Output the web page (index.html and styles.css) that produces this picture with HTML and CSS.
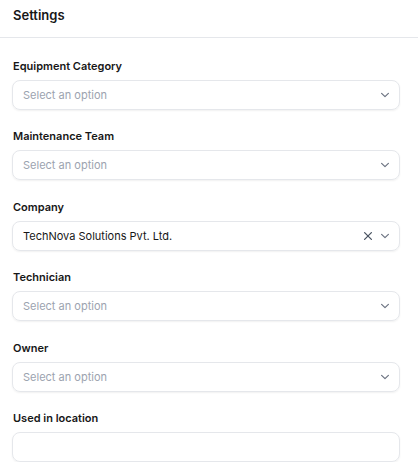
FILE: index.html
```html
<!DOCTYPE html>
<html>
<head>
	<title>Settings</title>
	<meta charset="utf-8">
	<link rel="stylesheet" href="styles.css">
</head>
<body>
	<div class="panel">
		<div class="panelhead">Settings</div>
		<div class="form">
			<div class="field">
				<label>Equipment Category</label>
				<div class="select">
					<span class="placeholder">Select an option</span>
					<svg class="chev" width="10" height="10" viewBox="0 0 10 10"><path d="M1.6 3.4 L5 6.6 L8.4 3.4" fill="none" stroke="#6b7280" stroke-width="1.2" stroke-linecap="round" stroke-linejoin="round"/></svg>
				</div>
			</div>
			<div class="field">
				<label>Maintenance Team</label>
				<div class="select">
					<span class="placeholder">Select an option</span>
					<svg class="chev" width="10" height="10" viewBox="0 0 10 10"><path d="M1.6 3.4 L5 6.6 L8.4 3.4" fill="none" stroke="#6b7280" stroke-width="1.2" stroke-linecap="round" stroke-linejoin="round"/></svg>
				</div>
			</div>
			<div class="field">
				<label>Company</label>
				<div class="select">
					<span class="value">TechNova Solutions Pvt. Ltd.</span>
					<svg class="clear" width="10" height="10" viewBox="0 0 10 10"><path d="M1.6 1.6 L8.4 8.4 M8.4 1.6 L1.6 8.4" fill="none" stroke="#4b5563" stroke-width="1.3" stroke-linecap="round"/></svg>
					<svg class="chev" width="10" height="10" viewBox="0 0 10 10"><path d="M1.6 3.4 L5 6.6 L8.4 3.4" fill="none" stroke="#6b7280" stroke-width="1.2" stroke-linecap="round" stroke-linejoin="round"/></svg>
				</div>
			</div>
			<div class="field">
				<label>Technician</label>
				<div class="select">
					<span class="placeholder">Select an option</span>
					<svg class="chev" width="10" height="10" viewBox="0 0 10 10"><path d="M1.6 3.4 L5 6.6 L8.4 3.4" fill="none" stroke="#6b7280" stroke-width="1.2" stroke-linecap="round" stroke-linejoin="round"/></svg>
				</div>
			</div>
			<div class="field">
				<label>Owner</label>
				<div class="select">
					<span class="placeholder">Select an option</span>
					<svg class="chev" width="10" height="10" viewBox="0 0 10 10"><path d="M1.6 3.4 L5 6.6 L8.4 3.4" fill="none" stroke="#6b7280" stroke-width="1.2" stroke-linecap="round" stroke-linejoin="round"/></svg>
				</div>
			</div>
			<div class="field">
				<label>Used in location</label>
				<div class="select"></div>
			</div>
		</div>
	</div>
</body>
</html>
```

FILE: styles.css
```css
body {
	margin: 0;
	background-color: #fff;
	font-family: Inter, "Noto Sans", sans-serif;
	color: #171717;
}
.panelhead {
	height: 38px;
	line-height: 31px;
	padding-left: 13px;
	font-size: 13px;
	font-weight: 600;
	border-bottom: 1px solid #e5e7eb;
	box-sizing: border-box;
}
.form {
	display: flex;
	flex-direction: column;
	gap: 18.4px;
	padding: 20px 18px 0 12px;
}
.field label {
	display: block;
	font-size: 11px;
	font-weight: 600;
	line-height: 16px;
	padding-left: 1px;
	margin-bottom: 6px;
}
.select {
	height: 30px;
	box-sizing: border-box;
	border: 1px solid #e5e7eb;
	border-radius: 8px;
	box-shadow: 0 1px 2px rgba(0, 0, 0, 0.06);
	display: flex;
	align-items: center;
	padding: 0 9px 0 10px;
	gap: 7px;
	font-size: 11px;
}
.placeholder {
	color: #9ca3af;
	flex: 1;
}
.value {
	color: #171717;
	flex: 1;
}
```
